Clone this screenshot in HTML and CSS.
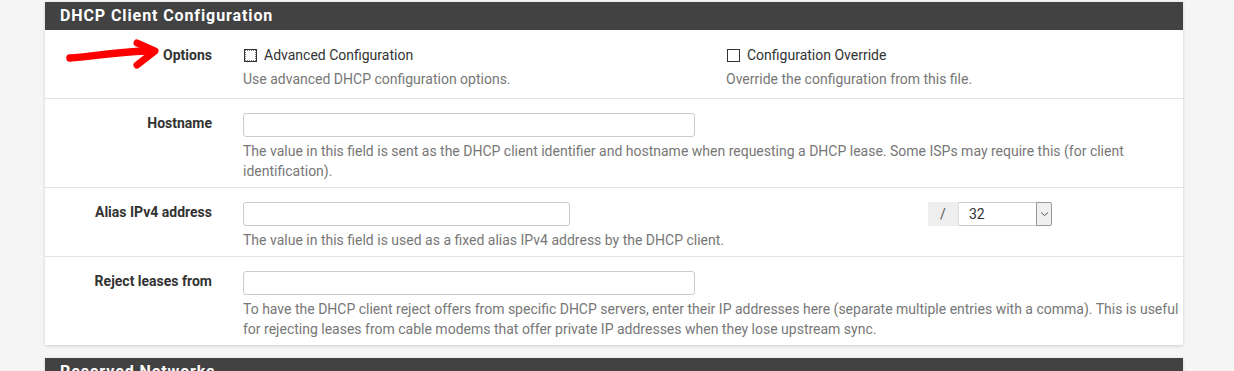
FILE: index.html
```html
<!DOCTYPE html>
<html lang="en">

<head>
  <meta charset="utf-8">
  <title>Interfaces: WAN</title>
  <link rel="stylesheet" href="styles.css">
</head>

<body>
  <div class="page">
    <svg class="marca" width="200" height="80" viewBox="0 0 200 80">
      <path d="M70 58 C 90 57, 112 52, 146 51" fill="none" stroke="#f00" stroke-width="7.5" stroke-linecap="round" />
      <path d="M137 43 L 155 51 L 137 65" fill="none" stroke="#f00" stroke-width="7" stroke-linecap="round"
        stroke-linejoin="round" />
    </svg>

    <div class="panel">
      <div class="panel-heading">DHCP Client Configuration</div>

      <div class="row">
        <div class="rotulo">Options</div>
        <div class="campo duas-colunas">
          <div>
            <label class="check"><span class="caixa foco"></span>Advanced Configuration</label>
            <div class="ajuda">Use advanced DHCP configuration options.</div>
          </div>
          <div>
            <label class="check"><span class="caixa"></span>Configuration Override</label>
            <div class="ajuda">Override the configuration from this file.</div>
          </div>
        </div>
      </div>

      <div class="row">
        <div class="rotulo">Hostname</div>
        <div class="campo">
          <input type="text" class="entrada larga">
          <div class="ajuda">The value in this field is sent as the DHCP client identifier and hostname when requesting a
            DHCP lease. Some ISPs may require this (for client identification).</div>
        </div>
      </div>

      <div class="row">
        <div class="rotulo">Alias IPv4 address</div>
        <div class="campo">
          <div class="alias">
            <input type="text" class="entrada curta">
            <div class="grupo">
              <span class="addon">/</span>
              <div class="seletor">
                <span>32</span>
                <span class="seta">
                  <svg width="9" height="6" viewBox="0 0 9 6">
                    <path d="M1 1.5 L4.5 4.5 L8 1.5" fill="none" stroke="#555" stroke-width="1" />
                  </svg>
                </span>
              </div>
            </div>
          </div>
          <div class="ajuda">The value in this field is used as a fixed alias IPv4 address by the DHCP client.</div>
        </div>
      </div>

      <div class="row">
        <div class="rotulo">Reject leases from</div>
        <div class="campo">
          <input type="text" class="entrada larga">
          <div class="ajuda">To have the DHCP client reject offers from specific DHCP servers, enter their IP addresses
            here (separate multiple entries with a comma). This is useful for rejecting leases from cable modems that
            offer private IP addresses when they lose upstream sync.</div>
        </div>
      </div>
    </div>

    <div class="panel">
      <div class="panel-heading">Reserved Networks</div>
    </div>
  </div>
</body>

</html>
```

FILE: styles.css
```css
body {
  margin: 0;
  background-color: #f5f5f5;
  font-family: Roboto, "Liberation Sans", sans-serif;
  font-size: 14px;
  color: #333;
}

.page {
  position: relative;
  padding-top: 2px;
}

.marca {
  position: absolute;
  top: 0;
  left: 0;
  pointer-events: none;
  z-index: 2;
}

.panel {
  margin-left: 45px;
  width: 1138px;
  background-color: #fff;
  box-shadow: 0 1px 3px rgba(0, 0, 0, 0.16);
  margin-bottom: 13px;
}

.panel-heading {
  background-color: #424242;
  color: #fff;
  height: 28px;
  line-height: 28px;
  padding-left: 15px;
  font-size: 16px;
  font-weight: bold;
  letter-spacing: 0.9px;
}

.row {
  display: grid;
  grid-template-columns: 167px 1fr;
  column-gap: 31px;
  padding: 14px 0 6px 0;
  border-top: 1px solid #e3e3e3;
  line-height: 20px;
}

.panel-heading + .row {
  border-top: none;
  padding-top: 15px;
  padding-bottom: 9px;
}

.rotulo {
  text-align: right;
  font-weight: bold;
}

.duas-colunas {
  display: grid;
  grid-template-columns: 483px 1fr;
}

.check {
  display: flex;
  align-items: center;
}

.caixa {
  width: 11px;
  height: 11px;
  border: 1px solid #333;
  margin: 0 7px 0 1px;
}

.caixa.foco {
  outline: 1px dotted #777;
  outline-offset: -2px;
}

.ajuda {
  color: #777;
  margin-top: 4px;
}

.entrada {
  display: block;
  box-sizing: border-box;
  height: 24px;
  border: 1px solid #ccc;
  border-radius: 3px;
  margin: 0;
  padding: 0 8px;
  font: inherit;
}

.larga {
  width: 452px;
}

.curta {
  width: 327px;
}

.alias {
  display: grid;
  grid-template-columns: 685px 124px;
}

.grupo {
  display: flex;
  height: 24px;
}

.addon {
  width: 31px;
  box-sizing: border-box;
  background-color: #eee;
  color: #555;
  text-align: center;
  line-height: 24px;
  border-right: 1px solid #ddd;
}

.seletor {
  flex: 1;
  display: flex;
  justify-content: space-between;
  box-sizing: border-box;
  border: 1px solid #ccc;
  border-left: none;
  border-radius: 0 3px 3px 0;
  padding-left: 10px;
  line-height: 22px;
}

.seta {
  width: 16px;
  box-sizing: border-box;
  background-color: #f0f0f0;
  border: 1px solid #9a9a9a;
  border-radius: 0 2px 2px 0;
  margin: -1px -1px -1px 0;
  display: flex;
  align-items: center;
  justify-content: center;
}
```
